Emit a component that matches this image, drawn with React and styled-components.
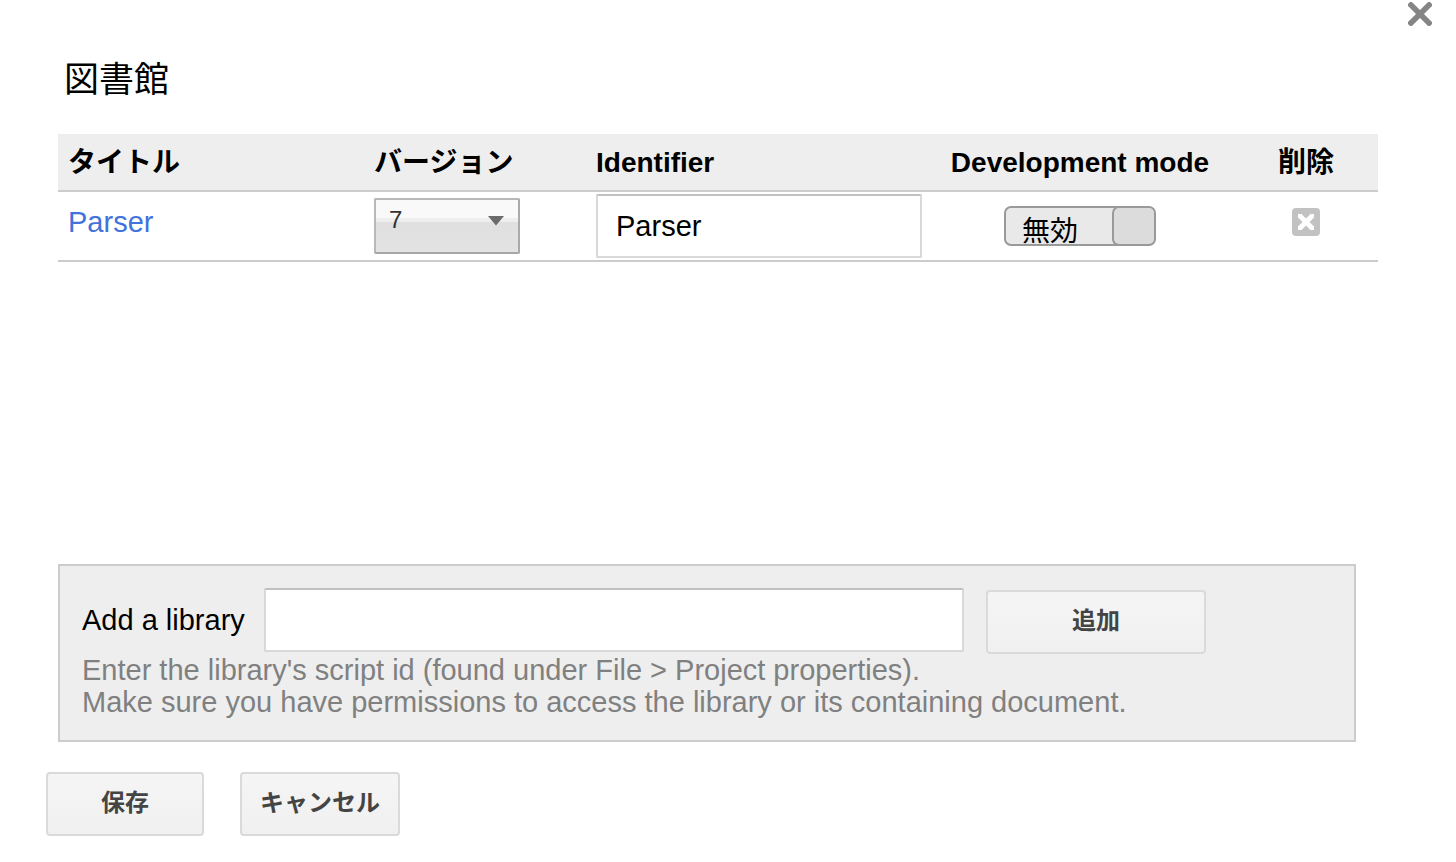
import React, { useState } from "react";
import styled, { createGlobalStyle } from "styled-components";

const GlobalStyle = createGlobalStyle`
  *, *::before, *::after { box-sizing: border-box; }
  body {
    margin: 0;
    background: #fff;
    color: #000;
    font: 29px/32px "Liberation Sans", Arial, "Noto Sans CJK JP", sans-serif;
  }
  button, input, select { font: inherit; color: inherit; margin: 0; }
`;

const Dialog = styled.main`
  position: relative;
  padding: 56px 78px 26px 58px;
`;

const CloseButton = styled.button`
  position: absolute;
  top: 2px;
  right: 24px;
  display: flex;
  width: 24px;
  height: 24px;
  padding: 0;
  border: 0;
  background: none;
  cursor: pointer;
`;

const Title = styled.h1`
  margin: 0 0 30px;
  padding-left: 6px;
  font-size: 35px;
  line-height: 48px;
  font-weight: 400;
`;

const LibraryList = styled.section`
  min-height: 430px;
`;

const Table = styled.table`
  width: 100%;
  table-layout: fixed;
  border-collapse: separate;
  border-spacing: 0;
`;

const Column = styled.col`
  width: ${(p) => p.$width};
`;

const HeadCell = styled.th`
  height: 58px;
  padding: 2px 10px 0;
  border-bottom: 2px solid #ccc;
  background: #eee;
  font-size: 28px;
  text-align: ${(p) => p.$align || "left"};
  white-space: nowrap;
`;

const Cell = styled.td`
  height: 70px;
  padding: 2px 10px;
  border-bottom: 2px solid #ccc;
  text-align: ${(p) => p.$align || "left"};
  vertical-align: middle;
  ${(p) => p.$raised && "padding-bottom: 10px;"}
`;

const LibraryLink = styled.a`
  color: #4272db;
  text-decoration: none;
`;

const SelectBox = styled.span`
  position: relative;
  display: block;
  width: 146px;
  height: 56px;
`;

const VersionSelect = styled.select`
  appearance: none;
  width: 100%;
  height: 100%;
  padding: 0 40px 12px 13px;
  border: 2px solid #aaa;
  border-color: #b8b8b8 #aaa #a6a6a6 #b8b8b8;
  border-radius: 2px;
  background: linear-gradient(#f9f9f9 0 18px, #eee 18px 22px, #e0e0e0 22px, #e3e3e3);
  color: #333;
  font-size: 24px;
`;

const SelectArrow = styled.svg`
  position: absolute;
  top: 18px;
  right: 16px;
  pointer-events: none;
`;

const TextInput = styled.input`
  display: block;
  width: ${(p) => p.$width || "auto"};
  flex: ${(p) => (p.$grow ? "1" : "none")};
  min-width: 0;
  height: 64px;
  padding: 0 18px;
  border: 2px solid #d9d9d9;
  border-top-color: #c0c0c0;
  border-radius: 2px;
  background: #fff;
`;

const Switch = styled.label`
  position: relative;
  display: flex;
  width: 152px;
  height: 40px;
  margin: 0 auto;
  border: 2px solid #999;
  border-radius: 7px;
  background: #e9e9e9;
  overflow: hidden;
  flex-direction: ${(p) => (p.$on ? "row-reverse" : "row")};
`;

const SwitchInput = styled.input`
  position: absolute;
  inset: 0;
  width: 100%;
  height: 100%;
  opacity: 0;
  cursor: pointer;
`;

const SwitchText = styled.span`
  flex: 1;
  padding: 6px 16px 0;
  text-align: left;
  font-size: 28px;
  line-height: 36px;
`;

const SwitchKnob = styled.span`
  width: 44px;
  margin: -2px;
  border: 2px solid #999;
  border-radius: 7px;
  background: #dcdcdc;
`;

const DeleteButton = styled.button`
  display: flex;
  width: 28px;
  height: 28px;
  margin: 0 auto;
  padding: 0;
  border: 0;
  border-radius: 4px;
  background: #c2c2c2;
  cursor: pointer;
`;

const AddPanel = styled.form`
  margin-right: 22px;
  padding: 22px;
  border: 2px solid #ccc;
  background: #eee;
`;

const AddRow = styled.div`
  display: flex;
  align-items: flex-start;
  gap: 22px;
  height: 66px;
  padding-right: 126px;
`;

const AddLabel = styled.label`
  width: 160px;
  line-height: 64px;
  white-space: nowrap;
`;

const Help = styled.p`
  margin: 0;
  color: #808080;
`;

const Button = styled.button`
  width: ${(p) => p.$width};
  height: 64px;
  padding: 0 0 2px;
  align-self: flex-end;
  border: 2px solid #dadada;
  border-radius: 4px;
  background: linear-gradient(#f5f5f5, #f0f0f0);
  color: #444;
  font-size: 24px;
  font-weight: 700;
  white-space: nowrap;
  cursor: pointer;
`;

const Actions = styled.div`
  display: flex;
  gap: 36px;
  margin: 30px 0 0 -12px;
`;

export default function App() {
  const [devMode, setDevMode] = useState(false);
  return (
    <>
      <GlobalStyle />
      <Dialog>
        <CloseButton type="button" aria-label="Close">
          <svg width="24" height="24" viewBox="0 0 24 24">
            <path d="M1 1 23 23M23 1 1 23" stroke="#858585" strokeWidth="5.6" />
          </svg>
        </CloseButton>
        <Title>図書館</Title>
        <LibraryList>
          <Table>
            <colgroup>
              <Column $width="306px" />
              <Column $width="222px" />
              <Column $width="auto" />
              <Column $width="308px" />
              <Column $width="144px" />
            </colgroup>
            <thead>
              <tr>
                <HeadCell>タイトル</HeadCell>
                <HeadCell>バージョン</HeadCell>
                <HeadCell>Identifier</HeadCell>
                <HeadCell $align="center">Development mode</HeadCell>
                <HeadCell $align="center">削除</HeadCell>
              </tr>
            </thead>
            <tbody>
              <tr>
                <Cell $raised>
                  <LibraryLink href="#parser">Parser</LibraryLink>
                </Cell>
                <Cell>
                  <SelectBox>
                    <VersionSelect aria-label="バージョン" defaultValue="7">
                      <option value="7">7</option>
                    </VersionSelect>
                    <SelectArrow width="16" height="10" viewBox="0 0 16 10">
                      <path d="M0 0H16L8 9.5Z" fill="#6b6b6b" />
                    </SelectArrow>
                  </SelectBox>
                </Cell>
                <Cell>
                  <TextInput $width="326px" aria-label="Identifier" defaultValue="Parser" />
                </Cell>
                <Cell $align="center">
                  <Switch $on={devMode}>
                    <SwitchText>{devMode ? "有効" : "無効"}</SwitchText>
                    <SwitchKnob />
                    <SwitchInput
                      type="checkbox"
                      role="switch"
                      aria-label="Development mode"
                      checked={devMode}
                      onChange={(e) => setDevMode(e.target.checked)}
                    />
                  </Switch>
                </Cell>
                <Cell $align="center" $raised>
                  <DeleteButton type="button" aria-label="削除">
                    <svg width="28" height="28" viewBox="0 0 28 28">
                      <path
                        d="M6 6H9.5L14 10.5 18.5 6H22V9.5L17.5 14 22 18.5V22H18.5L14 17.5 9.5 22H6V18.5L10.5 14 6 9.5Z"
                        fill="#fff"
                      />
                    </svg>
                  </DeleteButton>
                </Cell>
              </tr>
            </tbody>
          </Table>
        </LibraryList>
        <AddPanel onSubmit={(e) => e.preventDefault()}>
          <AddRow>
            <AddLabel htmlFor="library-id">Add a library</AddLabel>
            <TextInput id="library-id" $grow />
            <Button type="submit" $width="220px">追加</Button>
          </AddRow>
          <Help>
            Enter the library's script id (found under File &gt; Project properties).
            <br />
            Make sure you have permissions to access the library or its containing document.
          </Help>
        </AddPanel>
        <Actions>
          <Button type="button" $width="158px">保存</Button>
          <Button type="button" $width="160px">キャンセル</Button>
        </Actions>
      </Dialog>
    </>
  );
}
